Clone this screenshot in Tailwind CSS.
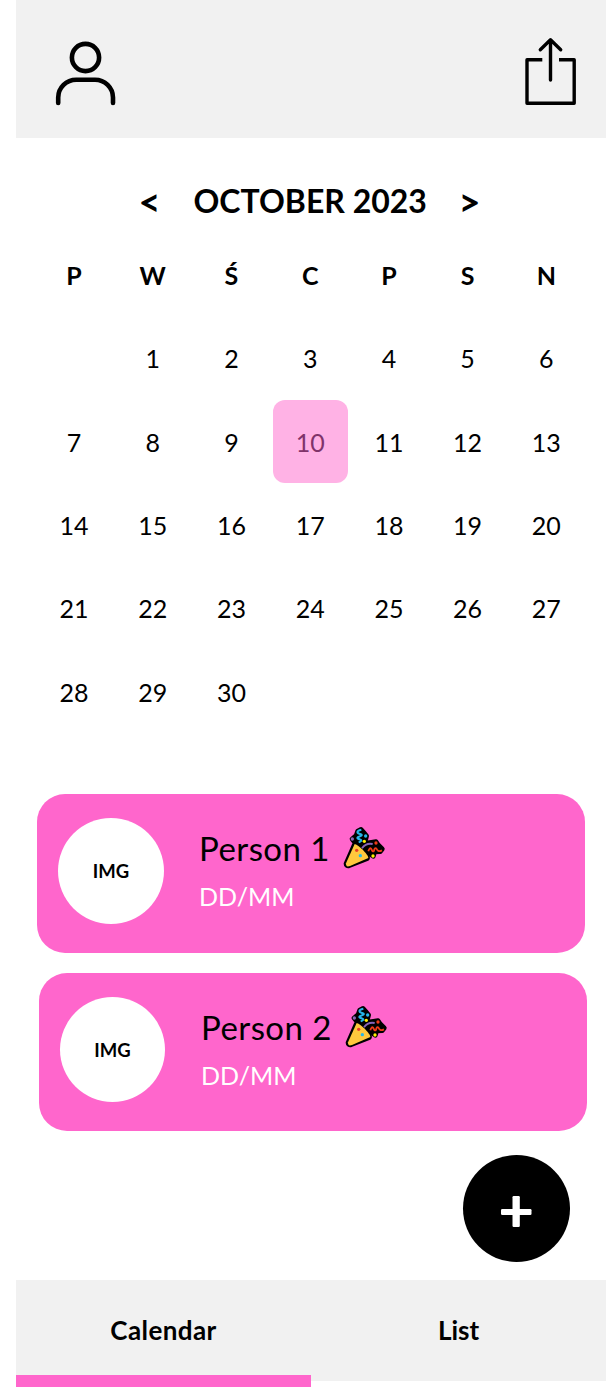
<!DOCTYPE html>
<html lang="en">
<head>
<meta charset="utf-8">
<title>Birthday calendar</title>
<script src="https://cdn.jsdelivr.net/npm/@tailwindcss/browser@4"></script>
</head>
<body class="bg-white">
<svg class="hidden">
  <symbol id="popper" viewBox="36 33 132 132">
    <g stroke="#000" stroke-width="14" stroke-linejoin="round" stroke-linecap="round" fill="#000">
      <path d="M72 91 48 146Q48 154 58 152L112 131Q115 124 105 111Z"/>
      <path d="M66 72 78 62 83 48 93 43 101 52 110 63 106 78 95 88 75 83Z"/>
      <path d="M95 92 108 84 124 82 138 80 145 90 157 102 151 110 134 111 130 124 118 116Z"/>
    </g>
    <path d="M74 87C82 88 115 117 115 129L60 153Q47 158 48 145Z" fill="#ffc83d"/>
    <path d="M96 100Q108 83 128 87" fill="none" stroke="#8764b8" stroke-width="5.500"/>
    <path d="M94 44C78 48 81 54 88 56C101 60 94 63 87 65C76 69 86 72 91 74C98 77 91 80 86 82" fill="none" stroke="#26b5e8" stroke-width="6"/>
    <path d="M115 109Q119 97 123 101L127 108Q132 112 133 103Q136 96 140 102Q144 112 156 106" fill="none" stroke="#f03a17" stroke-width="5.500"/>
    <circle cx="67" cy="72" r="5" fill="#8764b8"/>
    <circle cx="107" cy="63" r="5" fill="#26b5e8"/>
    <circle cx="103" cy="79" r="5" fill="#fff100"/>
    <circle cx="138" cy="84" r="5" fill="#f03a17"/>
    <circle cx="129" cy="123" r="5" fill="#fff100"/>
    <circle cx="80" cy="106" r="5" fill="#e74025"/>
    <circle cx="91" cy="122" r="5" fill="#26b5e8"/>
  </symbol>
</svg>
<div class="flex h-[1387px] w-[606px] flex-col overflow-hidden pl-4 font-['Lato',sans-serif] text-black">
  <header class="flex h-[138px] shrink-0 items-start justify-between bg-[#f1f1f1] pt-[36px] pr-[28px] pl-[38px]">
    <svg class="mt-1 h-[68px] w-[63px]" viewBox="54 40 63 68" fill="none" stroke="#000" stroke-width="4.6" stroke-linecap="round">
      <circle cx="85.5" cy="57.5" r="13.6"/>
      <path d="M58.2 103V97.500A18 18 0 0 1 76.200 79.700H95A18 18 0 0 1 113 97.500V103"/>
    </svg>
    <svg class="h-[70px] w-[55px]" viewBox="523 36 55 70" fill="none" stroke="#000" stroke-width="3.4" stroke-linejoin="round">
      <path d="M542.300 59.700H527V103.300H574.200V59.700H559"/>
      <path stroke-linecap="round" d="M550.500 80V40M540.300 49.800 550.500 39.800 560.700 49.800"/>
    </svg>
  </header>

  <main class="h-[1142px] shrink-0">
    <div class="flex h-[95px] items-center justify-center pt-[30px] pr-[3px] text-[32px] font-bold leading-none">
      <span class="w-[55px] shrink-0 text-[38px] leading-8">&lt;</span>
      <h1 class="w-[232px] whitespace-nowrap text-center">OCTOBER 2023</h1>
      <span class="w-[55px] shrink-0 text-right text-[38px] leading-8">&gt;</span>
    </div>
    <div class="ml-[18.700px] grid h-[500px] w-[551px] grid-cols-7 grid-rows-6 text-[25px] *:pt-[2px]">
      <b class="grid place-items-center">P</b><b class="grid place-items-center">W</b><b class="grid place-items-center">Ś</b><b class="grid place-items-center">C</b><b class="grid place-items-center">P</b><b class="grid place-items-center">S</b><b class="grid place-items-center">N</b>
      <span></span><span class="grid place-items-center">1</span><span class="grid place-items-center">2</span><span class="grid place-items-center">3</span><span class="grid place-items-center">4</span><span class="grid place-items-center">5</span><span class="grid place-items-center">6</span>
      <span class="grid place-items-center">7</span><span class="grid place-items-center">8</span><span class="grid place-items-center">9</span><span class="mx-auto grid w-[75px] place-items-center rounded-xl bg-[#ffb2e5] text-[#80336a]">10</span><span class="grid place-items-center">11</span><span class="grid place-items-center">12</span><span class="grid place-items-center">13</span>
      <span class="grid place-items-center">14</span><span class="grid place-items-center">15</span><span class="grid place-items-center">16</span><span class="grid place-items-center">17</span><span class="grid place-items-center">18</span><span class="grid place-items-center">19</span><span class="grid place-items-center">20</span>
      <span class="grid place-items-center">21</span><span class="grid place-items-center">22</span><span class="grid place-items-center">23</span><span class="grid place-items-center">24</span><span class="grid place-items-center">25</span><span class="grid place-items-center">26</span><span class="grid place-items-center">27</span>
      <span class="grid place-items-center">28</span><span class="grid place-items-center">29</span><span class="grid place-items-center">30</span>
    </div>

    <section class="mt-[60.500px] flex flex-col gap-5">
      <article class="ml-[21px] flex h-[159px] w-[548px] rounded-[28px] bg-[#ff66cc] pt-[25px] pl-[21px]">
        <div class="-mt-[0.500px] grid size-[106px] shrink-0 place-items-center rounded-full bg-white pt-[2px] text-[18.500px] font-bold">IMG</div>
        <div class="ml-[35px] pt-[8px]">
          <div class="flex h-11 items-center text-[33px] leading-none"><span class="w-[143px] whitespace-nowrap tracking-[0.450px]">Person 1</span><svg class="-mt-[1px] size-[44px]"><use href="#popper"/></svg></div>
          <p class="mt-[10px] text-[25px] leading-[30px] text-white">DD/MM</p>
        </div>
      </article>
      <article class="ml-[23px] flex h-[158px] w-[548px] rounded-[28px] bg-[#ff66cc] pt-[25px] pl-[21px]">
        <div class="-mt-[0.500px] grid size-[105px] shrink-0 place-items-center rounded-full bg-white pt-[2px] text-[18.500px] font-bold">IMG</div>
        <div class="ml-[36px] pt-[8px]">
          <div class="flex h-11 items-center text-[33px] leading-none"><span class="w-[143px] whitespace-nowrap tracking-[0.450px]">Person 2</span><svg class="-mt-[1px] size-[44px]"><use href="#popper"/></svg></div>
          <p class="mt-[10px] text-[25px] leading-[30px] text-white">DD/MM</p>
        </div>
      </article>
    </section>

    <button class="mt-6 ml-[447px] block size-[107px] rounded-full bg-black" aria-label="Add">
      <svg class="size-[107px]" viewBox="463 1155 107 107" fill="#fff">
        <rect x="501" y="1209" width="30.500" height="6" rx="1.200"/>
        <rect x="512.500" y="1196" width="7.300" height="31" rx="1.200"/>
      </svg>
    </button>
  </main>

  <nav class="flex h-[107px] shrink-0 text-[26px] font-bold">
    <div class="flex h-[107px] w-[295px] flex-col bg-[#f1f1f1]">
      <span class="grid h-[94.500px] place-items-center pt-[6px] tracking-[0.400px]">Calendar</span>
      <span class="h-[12.500px] bg-[#ff66cc]"></span>
    </div>
    <div class="grid h-[101px] w-[295px] place-items-center bg-[#f1f1f1]">List</div>
  </nav>
</div>
</body>
</html>
